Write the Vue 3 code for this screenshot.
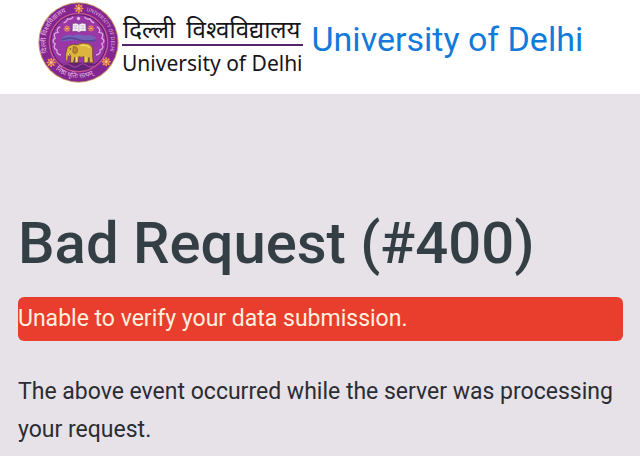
<script setup>
const stars = [
  { x: 146, y: 27, r: 14 },
  { x: 64, y: 187, r: 14 },
  { x: 227, y: 185, r: 14 },
  { x: 111, y: 87, r: 10 },
  { x: 182, y: 86, r: 10 },
]
const petals = [0, 45, 90, 135, 180, 225, 270, 315]
</script>

<template>
  <div class="page">
    <header class="header">
      <a class="brand" href="#">
        <svg class="emblem" viewBox="25 8 240 240" aria-hidden="true">
          <defs>
            <path id="arc-left" d="M52 157 A97 97 0 0 1 132 32" />
            <path id="arc-right" d="M168 34 A97 97 0 0 1 234 166" />
            <path id="arc-bottom" d="M77 208 A105 105 0 0 0 218 204" />
          </defs>
          <circle cx="145" cy="128" r="119" fill="#c9a06c" />
          <circle cx="145" cy="128" r="116" fill="#84268f" />
          <circle cx="145" cy="128" r="86" fill="none" stroke="#c95590" stroke-width="5" />
          <circle cx="145" cy="128" r="82" fill="#9a36a6" stroke="#57226c" stroke-width="3" />
          <g class="ring-text">
            <text><textPath href="#arc-left">दिल्ली विश्वविद्यालय</textPath></text>
            <text class="latin"><textPath href="#arc-right">UNIVERSITY OF DELHI</textPath></text>
            <text><textPath href="#arc-bottom">निष्ठा धृतिः सत्यम्</textPath></text>
          </g>
          <g fill="none" stroke="#dda5dc" stroke-width="4">
            <path d="M91 82 q-13 5 -7 16 q-17 2 -8 17 q-13 8 0 17 q-8 13 5 18 q-2 13 12 15" />
            <path d="M199 82 q13 5 7 16 q17 2 8 17 q13 8 0 17 q8 13 -5 18 q2 13 -12 15" />
            <path d="M101 70 q8 -1 12 -12 q10 4 16 -6 M163 52 q6 10 16 6 q5 11 13 12" />
          </g>
          <path d="M95 113 Q110 101 128 108 Q146 99 163 108 Q180 101 196 114 L198 125 Q145 117 93 125Z" fill="#7661b8" />
          <path d="M95 120 Q118 111 143 119 T197 121" fill="none" stroke="#554697" stroke-width="5" />
          <circle cx="145" cy="57" r="5" fill="#d9c4df" />
          <path d="M127 72 Q139 67 146 74 Q154 67 167 72 L168 96 Q155 92 146 98 Q137 92 126 96Z" fill="#f2ebf4" stroke="#6b347e" stroke-width="2" />
          <path d="M146 74 V97 M131 79 h10 M131 86 h10 M152 79 h10 M152 86 h10" fill="none" stroke="#b89fc3" stroke-width="2" />
          <path d="M94 192 Q145 182 196 192 Q177 210 145 210 Q111 210 94 192Z" fill="#612477" />
          <path d="M98 196 q12 -9 24 0 t24 0 t24 0 t22 0" fill="none" stroke="#a13c9c" stroke-width="4" />
          <path d="M110 149 Q111 138 121 136 Q131 131 140 135 Q155 126 175 132 Q188 138 187 153 Q186 169 189 188 L178 188 L176 172 L173 188 L161 188 L161 170 Q153 173 146 170 L144 188 L134 188 L134 172 L130 188 L121 188 L122 168 Q118 163 118 159 Q113 168 113 181 Q110 185 107 180 Q105 162 110 149Z" fill="#dcb63c" stroke="#5e3826" stroke-width="2" />
          <path d="M130 140 Q146 141 141 157 Q135 165 128 157Z" fill="#c18a29" stroke="#805022" stroke-width="2" />
          <path d="M119 158 Q112 163 119 167 M151 138 Q168 133 177 144 M167 170 V186 M139 172 V186" fill="none" stroke="#f3e281" stroke-width="3" />
          <circle cx="121" cy="147" r="2" fill="#41212f" />
          <g v-for="(s, i) in stars" :key="i" :transform="`translate(${s.x} ${s.y})`">
            <ellipse
              v-for="a in petals"
              :key="a"
              :cy="-s.r * 0.6"
              :rx="s.r * 0.2"
              :ry="s.r * 0.4"
              :transform="`rotate(${a})`"
              fill="#f29a54"
            />
            <circle :r="s.r * 0.42" fill="#ffc07a" stroke="#b84a50" stroke-width="2" />
          </g>
        </svg>
        <span class="wordmark">
          <span class="hindi" lang="hi"><span>दिल्ली</span> <span>विश्वविद्यालय</span></span>
          <span class="english">University of Delhi</span>
        </span>
        <span class="site-name">University of Delhi</span>
      </a>
    </header>
    <main class="content">
      <h1>Bad Request (#400)</h1>
      <div class="alert" role="alert">Unable to verify your data submission.</div>
      <p>The above event occurred while the server was processing your request.</p>
    </main>
  </div>
</template>

<style>
body {
  margin: 0;
  background: #e6e2e8;
}
</style>

<style scoped>
.page {
  min-height: 100vh;
  background: #e6e2e8;
  color: #2b2c33;
  font-family: Roboto, sans-serif;
  font-size: 23px;
  line-height: 38px;
}
.header {
  box-sizing: border-box;
  height: 94px;
  padding: 2px 38px;
  background: #fff;
}
.brand {
  display: flex;
  align-items: flex-start;
  color: #117adb;
  text-decoration: none;
  white-space: nowrap;
}
.emblem {
  flex: none;
  width: 81px;
  height: 81px;
}
.ring-text {
  fill: #e6b9e3;
  font-family: "Noto Sans", sans-serif;
  font-size: 20px;
}
.latin {
  font-size: 15px;
}
.wordmark {
  display: flex;
  flex-direction: column;
  margin-left: 3px;
  padding-top: 14px;
  color: #171419;
  font-family: "Noto Sans", "Open Sans", sans-serif;
}
.hindi {
  display: flex;
  justify-content: space-between;
  padding: 0 2px 2px 1px;
  border-bottom: 2px solid #55256e;
  font-size: 24px;
  line-height: 26px;
}
.english {
  font-size: 21px;
  line-height: 34px;
}
.site-name {
  margin-left: 9px;
  padding-top: 17px;
  font-size: 34px;
  line-height: 40px;
}
.content {
  padding: 112px 17px 10px 18px;
}
h1 {
  margin: 0 0 17px;
  color: #343f45;
  font-size: 58px;
  font-weight: 500;
  line-height: 74px;
}
.alert {
  padding: 3px 0;
  border-radius: 6px;
  background: #e93e2d;
  color: #fff0df;
}
p {
  margin: 32px 0 0;
}
</style>
